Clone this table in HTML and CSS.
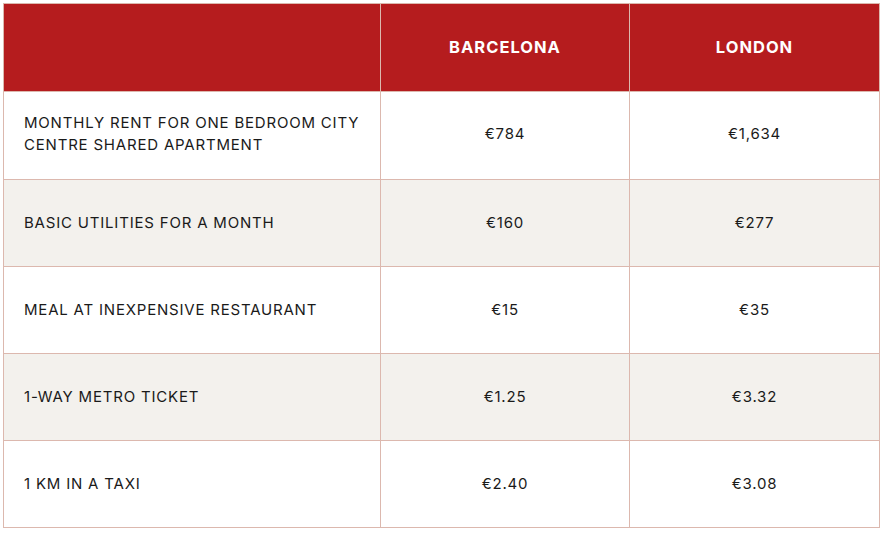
FILE: index.html
```html
<!DOCTYPE html>
<html>
<head>
<meta charset="utf-8">
<link rel="stylesheet" href="styles.css">
</head>
<body>
<div class="wrap">
<table class="costs">
  <colgroup><col class="c1"><col class="c2"><col class="c3"></colgroup>
  <thead>
    <tr><th></th><th>BARCELONA</th><th>LONDON</th></tr>
  </thead>
  <tbody>
    <tr class="first"><td class="label">MONTHLY RENT FOR ONE BEDROOM CITY<br>CENTRE SHARED APARTMENT</td><td>€784</td><td>€1,634</td></tr>
    <tr class="alt"><td class="label">BASIC UTILITIES FOR A MONTH</td><td>€160</td><td>€277</td></tr>
    <tr><td class="label">MEAL AT INEXPENSIVE RESTAURANT</td><td>€15</td><td>€35</td></tr>
    <tr class="alt"><td class="label">1-WAY METRO TICKET</td><td>€1.25</td><td>€3.32</td></tr>
    <tr><td class="label">1 KM IN A TAXI</td><td>€2.40</td><td>€3.08</td></tr>
  </tbody>
</table>
</div>
</body>
</html>
```
FILE: styles.css
```css
html, body { margin: 0; padding: 0; background: #ffffff; }
.wrap { padding: 3px 4px 0 3px; }
.costs {
  width: 876px;
  border-collapse: collapse;
  table-layout: fixed;
  font-family: "Inter", "Open Sans", sans-serif;
  color: #1a1a1a;
}
.c1 { width: 377px; }
.c2 { width: 249px; }
.c3 { width: 250px; }
.costs th, .costs td {
  border: 1px solid #dcb8ae;
  height: 86px;
  padding: 0;
  text-align: center;
  vertical-align: middle;
}
.costs th {
  background: #b51c1e;
  color: #ffffff;
  font-weight: 700;
  font-size: 16.5px;
  letter-spacing: 1px;
  height: 85px;
  padding-bottom: 2px;
}
.costs td {
  font-size: 15px;
  font-weight: 400;
  letter-spacing: 0.8px;
  line-height: 22px;
}
.costs tr.first td { height: 84px; padding-bottom: 3px; }
.costs td.label { text-align: left; padding-left: 20px; }
.costs tr.alt td { background: #f3f1ed; }
```
